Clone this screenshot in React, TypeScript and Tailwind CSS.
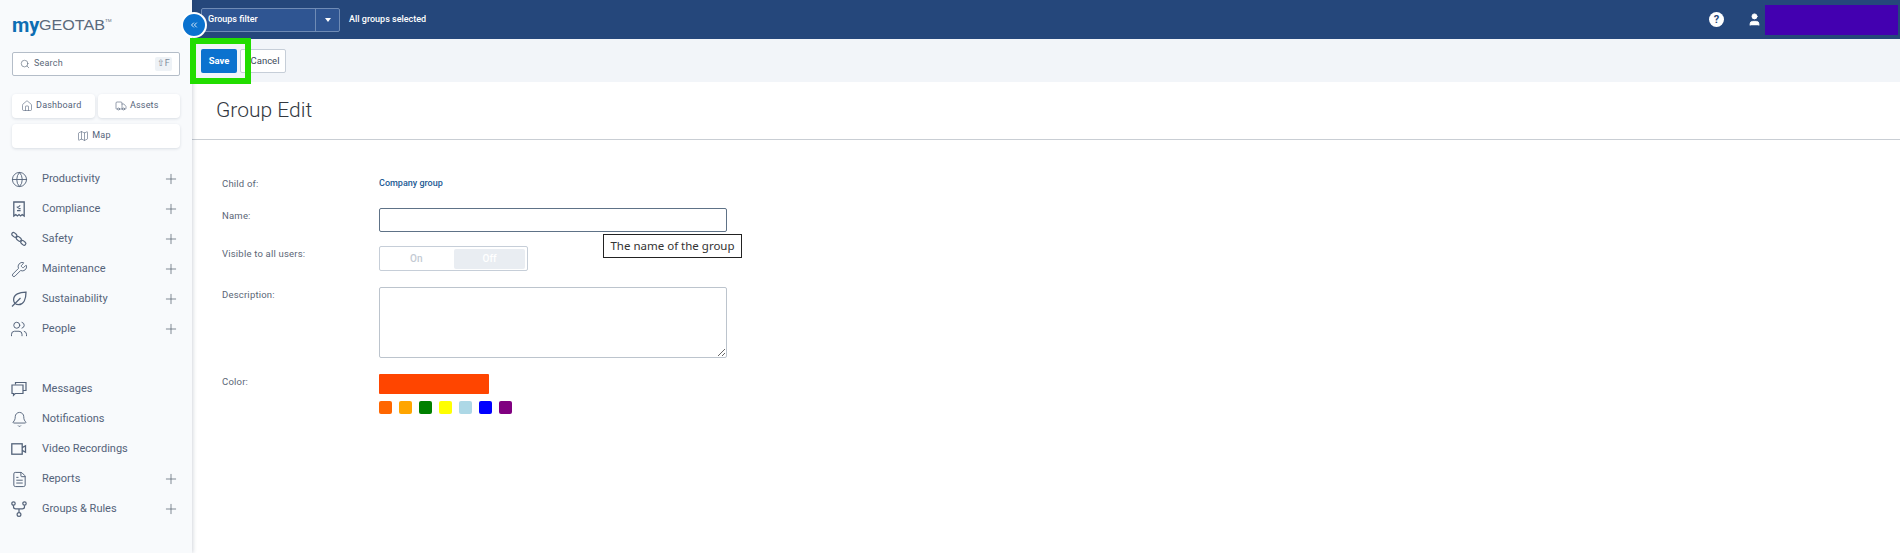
import { Bell, ChevronsLeft, Globe, House, Map as MapIcon, Plus, Search, Truck, User, Users, Wrench, FileText } from 'lucide-react'
import type { ReactNode } from 'react'

const SeatBelt = () => (
  <svg width="18" height="18" viewBox="0 0 18 18" fill="none" stroke="currentColor" strokeWidth="1.2">
    <rect x="1.5" y="3.2" width="5.6" height="3.4" rx="1.7" transform="rotate(40 4.3 4.9)" />
    <rect x="6" y="7.2" width="5.6" height="3.4" rx="1.7" transform="rotate(40 8.8 8.9)" />
    <rect x="10.5" y="11.2" width="5.6" height="3.4" rx="1.7" transform="rotate(40 13.3 12.9)" />
  </svg>
)

const Receipt = () => (
  <svg width="18" height="18" viewBox="0 0 18 18" fill="none" stroke="currentColor" strokeWidth="1.3">
    <path d="M3.8 2h10.4v14l-2-1.4-1.6 1.4L9 14.6 7.4 16l-1.6-1.4-2 1.4z" />
    <path d="M6.8 6.6l1 1 2.4-2.2M7 10.6h3.6M8.4 8.6h2.2" strokeWidth="1.1" />
  </svg>
)

const LeafIcon = () => (
  <svg width="18" height="18" viewBox="0 0 18 18" fill="none" stroke="currentColor" strokeWidth="1.3">
    <path d="M16 2.2C9.5 2.2 3.6 4 3.6 9.8c0 2.9 2.3 4.9 4.9 4.9 5.3 0 7.5-6 7.5-12.5z" />
    <path d="M2 16.5l8.5-8.5" />
  </svg>
)

const Messages = () => (
  <svg width="18" height="18" viewBox="0 0 18 18" fill="none" stroke="currentColor" strokeWidth="1.2">
    <path d="M5.5 4.5V2.5h10.5v8h-3" />
    <path d="M2 5h11v8.5H5.2l-1.7 1.7v-1.7H2z" />
  </svg>
)

const VideoIcon = () => (
  <svg width="18" height="18" viewBox="0 0 18 18" fill="none" stroke="currentColor" strokeWidth="1.3">
    <rect x="1.8" y="3.8" width="10.4" height="10.4" />
    <path d="M12.2 7.6l3.3-1.8v6.4l-3.3-1.8" />
  </svg>
)

const GroupsIcon = () => (
  <svg width="18" height="18" viewBox="0 0 18 18" fill="none" stroke="currentColor" strokeWidth="1.2">
    <circle cx="3.5" cy="3.5" r="1.7" />
    <circle cx="14.5" cy="3.5" r="1.7" />
    <circle cx="9" cy="14.5" r="1.9" />
    <path d="M3.5 5.2v1.6c0 1.2 1 2 2 2h7c1 0 2-.8 2-2V5.2M9 8.8v3.8" />
  </svg>
)

type NavItem = { label: string; icon: ReactNode; more?: boolean }

const topNav: NavItem[] = [
  { label: 'Productivity', icon: <Globe size={17} strokeWidth={1.3} />, more: true },
  { label: 'Compliance', icon: <Receipt />, more: true },
  { label: 'Safety', icon: <SeatBelt />, more: true },
  { label: 'Maintenance', icon: <Wrench size={17} strokeWidth={1.3} />, more: true },
  { label: 'Sustainability', icon: <LeafIcon />, more: true },
  { label: 'People', icon: <Users size={18} strokeWidth={1.3} />, more: true },
]

const bottomNav: NavItem[] = [
  { label: 'Messages', icon: <Messages /> },
  { label: 'Notifications', icon: <Bell size={17} strokeWidth={1.3} /> },
  { label: 'Video Recordings', icon: <VideoIcon /> },
  { label: 'Reports', icon: <FileText size={17} strokeWidth={1.4} />, more: true },
  { label: 'Groups & Rules', icon: <GroupsIcon />, more: true },
]

const swatches = ['bg-[#ff6600]', 'bg-[#ffa500]', 'bg-[#008000]', 'bg-[#ffff00]', 'bg-[#add8e6]', 'bg-[#0000ff]', 'bg-[#800080]']

function NavRow({ item }: { item: NavItem }) {
  return (
    <div className="flex h-[30px] items-center pl-[10px] pr-[13px] text-[#54637a]">
      <span className="flex w-[18px] justify-center">{item.icon}</span>
      <span className="ml-[14px] flex-1 text-[11px]">{item.label}</span>
      {item.more && <Plus size={16} strokeWidth={1.1} className="text-[#56616f]" />}
    </div>
  )
}

function QuickLink({ icon, label, className }: { icon: ReactNode; label: string; className: string }) {
  return (
    <div className={`flex h-[24px] items-center justify-center gap-[3px] rounded-[4px] bg-white pr-[4px] text-[9px] tracking-[0.2px] text-[#54637a] shadow-[0_1px_3px_rgba(30,50,80,0.14)] ${className}`}>
      {icon}
      {label}
    </div>
  )
}

function Sidebar() {
  return (
    <aside className="z-10 h-full w-[192px] shrink-0 bg-[#f8fafc] shadow-[1px_0_4px_rgba(30,50,80,0.2)]">
      <div className="flex h-[52px] items-center pl-[12px] pb-[2px] text-[#5b6a7c]">
        <span className="text-[20px] leading-none font-bold text-[#0d6eb3]">my</span>
        <span className="relative origin-left font-['Liberation_Sans'] text-[14px] leading-none [transform:scaleX(1.15)]">
          GEOTAB
          <span className="absolute top-[1px] left-full text-[4px] leading-none">TM</span>
        </span>
      </div>
      <div className="mx-[12px] flex h-[24px] items-center rounded-[2px] border border-[#b4bdc8] bg-white pl-[7px] pr-[7px] text-[9px] tracking-[0.2px] text-[#5a6878]">
        <Search size={10} strokeWidth={1.5} />
        <span className="ml-[4px] flex-1">Search</span>
        <span className="rounded-[2px] bg-[#eef2f6] px-[2px] text-[#7d8a99]">⇧F</span>
      </div>
      <div className="mx-[12px] mt-[18px] grid grid-cols-2 gap-x-[3px] gap-y-[6px]">
        <QuickLink icon={<House size={12} strokeWidth={1.2} />} label="Dashboard" className="" />
        <QuickLink icon={<Truck size={12} strokeWidth={1.2} />} label="Assets" className="" />
        <QuickLink icon={<MapIcon size={12} strokeWidth={1.2} />} label="Map" className="col-span-2" />
      </div>
      <div className="mt-[16px]">
        {topNav.map((item) => (
          <NavRow key={item.label} item={item} />
        ))}
      </div>
      <div className="mt-[30px]">
        {bottomNav.map((item) => (
          <NavRow key={item.label} item={item} />
        ))}
      </div>
    </aside>
  )
}

function TopBar() {
  return (
    <div className="flex h-[39px] items-center bg-[#25477b] pr-[2px] pl-[9px] text-white">
      <div className="flex h-[24px] w-[139px] items-center rounded-[2px] border border-[#6f8bb5] bg-[#2f5592] text-[9px] font-medium">
        <span className="flex-1 pl-[6px]">Groups filter</span>
        <span className="flex h-full w-[24px] items-center justify-center border-l border-[#6f8bb5]">
          <span className="h-0 w-0 border-x-[3px] border-t-[4px] border-x-transparent border-t-white" />
        </span>
      </div>
      <span className="ml-[9px] flex-1 text-[9px] font-medium">All groups selected</span>
      <span className="flex h-[15px] w-[15px] items-center justify-center rounded-full bg-white text-[11px] leading-none font-bold text-[#25477b]">?</span>
      <User size={15} fill="white" strokeWidth={1.5} className="ml-[23px]" />
      <div className="ml-[3px] h-[30px] w-[133px] bg-[#4300b0]" />
    </div>
  )
}

function Field({ label, className, children }: { label: string; className: string; children: ReactNode }) {
  return (
    <div className={`flex ${className}`}>
      <label className="w-[157px] shrink-0 pt-[1px] text-[9.5px] tracking-[0.2px] text-[#5a6676]">{label}</label>
      <div className="relative">{children}</div>
    </div>
  )
}

export default function App() {
  return (
    <div className="flex h-screen overflow-hidden bg-white font-['Roboto',sans-serif]">
      <Sidebar />
      <main className="relative min-w-0 flex-1">
        <TopBar />
        <div className="flex h-[43px] items-center gap-[3px] bg-[#f2f5f9] pt-[1px] pl-[9px]">
          <button className="h-[24px] w-[36px] rounded-[2px] bg-[#0b72cf] text-[9.5px] font-bold text-white">Save</button>
          <button className="h-[24px] w-[46px] rounded-[2px] border border-[#c6ced8] bg-white pl-[4px] text-[9.5px] text-[#3d4a5a]">Cancel</button>
        </div>
        <div className="flex h-[58px] items-center border-b border-[#c9ced4] pt-[1px] pl-[24px]">
          <h1 className="text-[21px] font-light text-[#33383f]">Group Edit</h1>
        </div>
        <form className="pl-[30px] pt-[37px]">
          <Field label="Child of:" className="h-[14px] items-center">
            <span className="block text-[9px] font-medium text-[#1c5b94]">Company group</span>
          </Field>
          <Field label="Name:" className="mt-[17px]">
            <input className="block h-[24px] w-[348px] rounded-[2px] border border-[#5e7287] bg-white" />
            {/* help tooltip */}
            <div className="absolute top-[26px] left-[224px] flex h-[24px] w-[139px] items-center justify-center border border-[#222] bg-white font-['Noto_Sans'] text-[11.5px] whitespace-nowrap text-[#333]">
              The name of the group
            </div>
          </Field>
          <Field label="Visible to all users:" className="mt-[14px]">
            <div className="flex h-[25px] w-[149px] items-center justify-between rounded-[2px] border border-[#c6ced8] bg-white pr-[2px] pl-[30px] text-[10px] font-medium text-[#c3cad3]">
              <span>On</span>
              <span className="flex h-[20px] w-[71px] items-center justify-center rounded-[2px] bg-[#e9edf2] text-white">Off</span>
            </div>
          </Field>
          <Field label="Description:" className="mt-[16px]">
            <textarea className="block h-[71px] w-[348px] rounded-[2px] border border-[#bcc4cd] bg-white" />
          </Field>
          <Field label="Color:" className="mt-[16px]">
            <div>
              <div className="h-[20px] w-[110px] rounded-[1px] bg-[#ff4500]" />
              <div className="mt-[7px] flex gap-[7px]">
                {swatches.map((color) => (
                  <span key={color} className={`h-[13px] w-[13px] rounded-[2px] ${color}`} />
                ))}
              </div>
            </div>
          </Field>
        </form>
        {/* highlight drawn over the Save button */}
        <div className="absolute top-[38px] left-[-2px] z-20 h-[46px] w-[61px] border-[6px] border-[#22dd00]" />
        {/* collapse handle */}
        <div className="absolute top-[12px] left-[-11px] z-20 flex h-[26px] w-[26px] items-center justify-center rounded-full border-[2px] border-white bg-[#0b72cf] text-white">
          <ChevronsLeft size={10} />
        </div>
      </main>
    </div>
  )
}
